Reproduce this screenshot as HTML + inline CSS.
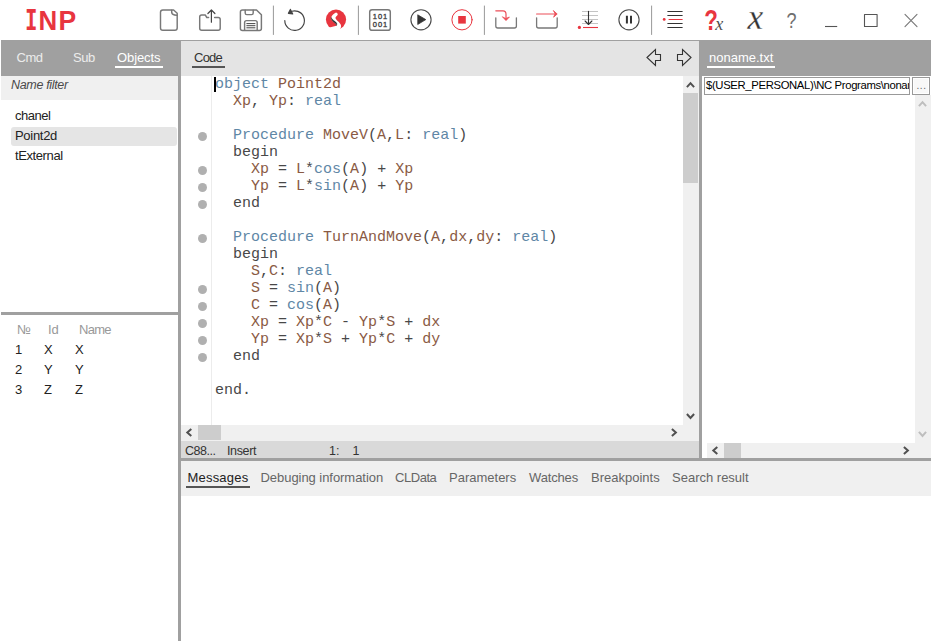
<!DOCTYPE html>
<html>
<head>
<meta charset="utf-8">
<title>INP</title>
<style>
html,body{margin:0;padding:0;}
body{width:932px;height:642px;overflow:hidden;background:#fff;position:relative;font-family:"Liberation Sans",sans-serif;font-size:13px;color:#333;}
.abs{position:absolute;}
#topbar{left:0;top:0;width:932px;height:40px;background:#fff;}
#topline{left:1px;top:40px;width:930px;height:1px;background:#a0a0a0;}
#logo{left:26px;top:3px;font-family:"DejaVu Sans Mono","Liberation Mono",monospace;font-weight:bold;font-size:27.5px;color:#e8353f;line-height:34px;letter-spacing:0px;}
#icons{left:0;top:0;width:932px;height:40px;}
/* left */
#lhead{left:1px;top:41px;width:177px;height:35px;background:#a0a0a0;}
.ltab{position:absolute;top:50px;font-size:13px;line-height:15px;color:#ececec;white-space:nowrap;}
#lfilter{left:1px;top:76px;width:177px;height:24px;background:#f0f0f0;}
#lfilter span{position:absolute;left:10px;top:2px;font-style:italic;font-size:12.5px;line-height:15px;color:#4a4a4a;letter-spacing:-0.33px;}
.vdiv{background:#a0a0a0;}
.hdiv{background:#a0a0a0;}
.li{position:absolute;left:15px;font-size:13px;line-height:15px;color:#222;white-space:nowrap;}
.th{position:absolute;font-size:13px;line-height:15px;color:#999;white-space:nowrap;}
.td{position:absolute;font-size:13px;line-height:15px;color:#222;white-space:nowrap;}
/* center */
#chead{left:181px;top:41px;width:518px;height:35px;background:#e4e4e4;}
#code{left:181px;top:76px;width:502px;height:349px;background:#fff;overflow:hidden;}
#gutter{left:211px;top:76px;width:1px;height:349px;background:#ececec;}
pre{margin:0;position:absolute;left:215px;top:76px;font-family:"Liberation Mono",monospace;font-size:15px;line-height:17px;color:#484848;}
.k{color:#5f87a6;}
.i{color:#8a5a44;}
.d{color:#404040;}
.dot{position:absolute;left:198px;width:9px;height:9px;border-radius:50%;background:#b0b0b0;}
.sb{background:#f0f0f0;}
.thumb{background:#cdcdcd;}
#status{left:181px;top:441px;width:518px;height:17px;background:#d9d9d9;}
.st{position:absolute;top:444px;font-size:12.5px;line-height:15px;color:#333;white-space:nowrap;}
/* right */
#rhead{left:699px;top:41px;width:232px;height:35px;background:#a0a0a0;}
/* bottom */
#btabs{left:181px;top:461px;width:750px;height:35px;background:#f0f0f0;}
.bt{position:absolute;top:470px;font-size:13px;line-height:15px;color:#666;white-space:nowrap;}
</style>
</head>
<body>
<div id="topbar" class="abs"></div>
<div id="topline" class="abs"></div>

<svg id="icons" class="abs" width="932" height="40" viewBox="0 0 932 40" fill="none" stroke-linecap="round" stroke-linejoin="round">
<g fill="#e8353f" stroke="none" font-weight="bold">
<text transform="translate(25.1 30.3) scale(0.75 1)" font-family="DejaVu Sans Mono, monospace" font-size="27.7">I</text>
<text transform="translate(38.5 30.3) scale(0.92 1)" font-family="Liberation Sans, sans-serif" font-size="28.2">N</text>
<text transform="translate(58.5 30.3) scale(0.94 1)" font-family="Liberation Sans, sans-serif" font-size="28.2">P</text>
</g>

<g stroke="#787878" stroke-width="1.45">
<!-- new file -->
<path d="M162.8 10 H173.6 L177.2 13.2 V28 Q177.2 30.3 174.9 30.3 H162.8 Q160.5 30.3 160.5 28 V12.3 Q160.5 10 162.8 10 Z"/>
<path d="M171.7 10.2 V12.4 Q171.9 15.3 177 15.2"/>
<!-- open folder -->
<path d="M208.6 17.5 H206.8 L205.2 14.9 H201.7 Q199.7 14.9 199.7 16.9 V28.3 Q199.7 30.3 201.7 30.3 H218.2 Q220.2 30.3 220.2 28.3 V19.5 Q220.2 17.5 218.2 17.5 H214.6"/>
<!-- save -->
<path d="M242.5 9.9 H256.5 L261.4 14.8 V28.4 Q261.4 30.4 259.4 30.4 H242.5 Q240.4 30.4 240.4 28.4 V12 Q240.4 9.9 242.5 9.9 Z"/>
<path d="M245.2 10.2 V13 Q245.2 14.6 246.8 14.6 H251.6 Q253.2 14.6 253.2 13 V10.2"/>
<path d="M244.6 30 V22.6 Q244.6 20.6 246.6 20.6 H255.2 Q257.2 20.6 257.2 22.6 V30"/>
</g>
<g stroke="#444" stroke-width="1.2">
<path d="M211.4 22.2 V10.2 M207.9 13.5 L211.4 10 L214.9 13.5"/>
<path d="M246.8 23.6 H255 M246.8 25.7 H255 M246.8 27.8 H255" stroke-width="1"/>
</g>
<!-- separators -->
<g stroke="#999" stroke-width="1">
<path d="M273.4 6 V34.5 M358.4 6 V34.5 M484.4 6 V34.5 M651.6 6 V34.5"/>
</g>
<!-- undo -->
<g stroke="#444" stroke-width="1.2">
<path d="M284.8 20.6 A9.8 9.8 0 1 0 289.6 12.2"/>
<path d="M290.4 9.4 L288.4 13.3 L292.7 13.9 Z" fill="#444"/>
</g>
<!-- S logo -->
<circle cx="336" cy="19.6" r="10.1" fill="#e8353f" stroke="none"/>
<path d="M336 12.4 C334.4 13 332.2 14.6 331.3 17 C330.6 19.4 332.6 21.2 334.2 22.6 C335.6 23.8 336.8 24.6 336.4 25.8 L327.6 28 L330 32 L341 32 L339.9 29.5 C341.6 27 341.4 25 340 23.4 C338.6 21.6 336.4 20.4 335.6 18.6 C335.2 17.4 336 16.6 337.2 15.6 C338.4 14.4 337.6 12.8 336 12.4 Z" fill="#fff" stroke="none"/>
<path d="M331.2 17.6 C330.9 19.6 332.6 21.2 334.2 22.6 C335.6 23.8 336.8 24.6 336.4 25.8 C337.6 24.2 336.8 22.8 335.4 21.8 C333.8 20.6 332.2 19.6 331.2 17.6 Z" fill="#2a2a2a" stroke="#2a2a2a" stroke-width="0.25"/>
<!-- 101 001 -->
<rect x="369.7" y="9.7" width="20.6" height="20.6" rx="2.4" stroke="#787878" stroke-width="1.45"/>
<text x="380.5" y="18.6" text-anchor="middle" font-family="Liberation Sans, sans-serif" font-weight="normal" font-size="7.5" fill="#444" stroke="#444" stroke-width="0.35" letter-spacing="1.05">101</text>
<text x="380.5" y="26.7" text-anchor="middle" font-family="Liberation Sans, sans-serif" font-weight="normal" font-size="7.5" fill="#444" stroke="#444" stroke-width="0.35" letter-spacing="1.05">001</text>
<!-- play -->
<circle cx="421" cy="19.8" r="10.1" stroke="#4a4a4a" stroke-width="1.1"/>
<path d="M418 15 L425.8 19.6 L418 24.3 Z" fill="#333" stroke="#333" stroke-width="0.8"/>
<!-- stop -->
<circle cx="462" cy="19.8" r="10.1" stroke="#e8353f" stroke-width="1"/>
<rect x="458.2" y="16" width="7.6" height="7.6" fill="#e8353f" stroke="none"/>
<!-- step in -->
<path d="M495.8 17.8 V26 Q495.8 28 497.8 28 H514.4 Q516.4 28 516.4 26 V17.8" stroke="#787878" stroke-width="1.3"/>
<path d="M495.8 10.8 H503 Q506 10.8 506 14 V19.5" stroke="#ec4e58" stroke-width="1.2"/><path d="M502.6 17 L506 20.6 L509.4 17 L506 18.4 Z" fill="#ec4e58" stroke="#ec4e58" stroke-width="0.8"/>
<!-- step over -->
<path d="M536.6 17.8 V26 Q536.6 28 538.6 28 H555.2 Q557.2 28 557.2 26 V17.8" stroke="#787878" stroke-width="1.3"/>
<path d="M536.6 14 H556" stroke="#ec4e58" stroke-width="1.2"/><path d="M553.6 10.8 L557.2 14 L553.6 17.2 L555 14 Z" fill="#ec4e58" stroke="#ec4e58" stroke-width="0.8"/>
<!-- run to cursor -->
<path d="M582 11.5 H598 M582 15.5 H598 M582 19.5 H598 M582 23.5 H598" stroke="#c4c4c4" stroke-width="1" stroke-linecap="butt"/>
<path d="M583 27.5 H598" stroke="#e8353f" stroke-width="1.1" stroke-linecap="butt"/>
<circle cx="579.4" cy="27.4" r="1.6" fill="#e8353f" stroke="none"/>
<path d="M588.5 11.3 V24.2 M585.1 21 L588.5 24.5 L591.9 21" stroke="#333" stroke-width="1.1"/>
<!-- pause -->
<circle cx="629" cy="19.8" r="10.1" stroke="#4a4a4a" stroke-width="1.1"/>
<path d="M626.9 15.8 V23.6 M631 15.8 V23.6" stroke="#333" stroke-width="2" stroke-linecap="butt"/>
<!-- list -->
<path d="M667.4 11.5 H682.6 M667.4 15.5 H682.6 M667.4 23.5 H682.6 M667.4 27.5 H682.6" stroke="#333" stroke-width="1" stroke-linecap="butt"/>
<path d="M668.6 19.5 H682.6" stroke="#e8353f" stroke-width="1" stroke-linecap="butt"/>
<circle cx="664.2" cy="19.4" r="1.4" fill="#e8353f" stroke="none"/>
<!-- ?x -->
<text transform="translate(704.3 29.5) scale(0.84 1.09)" font-family="Liberation Sans, sans-serif" font-weight="bold" font-size="26.5" fill="#e8353f" stroke="none">?</text>
<text x="715.2" y="29.7" font-family="Liberation Serif, serif" font-style="italic" font-size="18" fill="#3a3a3a" stroke="#fff" stroke-width="0.12">x</text>
<!-- X -->
<text transform="translate(747.6 29.2) scale(0.93 0.97)" font-family="Liberation Serif, serif" font-style="italic" font-size="38" fill="#333" stroke="#fff" stroke-width="0.3">x</text>
<!-- ? -->
<text transform="translate(786.6 28.3) scale(0.84 1)" font-family="Liberation Sans, sans-serif" font-size="21.5" fill="#707070" stroke="none">?</text>
<!-- window controls -->
<path d="M825 26.5 H837.2" stroke="#555" stroke-width="1.1" stroke-linecap="butt"/>
<rect x="864.5" y="14.5" width="12.6" height="12" stroke="#555" stroke-width="1.1"/>
<path d="M905 14.4 L917 26.6 M917 14.4 L905 26.6" stroke="#777" stroke-width="1.1"/>
</svg>

<!-- LEFT PANEL -->
<div id="lhead" class="abs"></div>
<div class="ltab" style="left:16.5px;letter-spacing:-0.5px;">Cmd</div>
<div class="ltab" style="left:73px;letter-spacing:-0.4px;">Sub</div>
<div class="ltab" style="left:117px;color:#fff;letter-spacing:-0.1px;">Objects</div>
<div class="abs" style="left:115px;top:66px;width:48px;height:2px;background:#fff;"></div>
<div id="lfilter" class="abs"><span>Name filter</span></div>
<div class="abs" style="left:11px;top:127px;width:166px;height:19px;background:#e5e5e5;border-radius:3px;"></div>
<div class="li" style="top:108px;letter-spacing:-0.5px;">chanel</div>
<div class="li" style="top:128px;letter-spacing:-0.3px;">Point2d</div>
<div class="li" style="top:148px;letter-spacing:-0.4px;">tExternal</div>
<div class="abs hdiv" style="left:1px;top:312px;width:178px;height:3px;"></div>
<div class="th" style="left:17px;top:322px;">№</div>
<div class="th" style="left:48px;top:322px;">Id</div>
<div class="th" style="left:79px;top:322px;letter-spacing:-0.7px;">Name</div>
<div class="td" style="left:15px;top:342px;">1</div>
<div class="td" style="left:44px;top:342px;">X</div>
<div class="td" style="left:75px;top:342px;">X</div>
<div class="td" style="left:15px;top:362px;">2</div>
<div class="td" style="left:44px;top:362px;">Y</div>
<div class="td" style="left:75px;top:362px;">Y</div>
<div class="td" style="left:15px;top:382px;">3</div>
<div class="td" style="left:44px;top:382px;">Z</div>
<div class="td" style="left:75px;top:382px;">Z</div>
<div class="abs vdiv" style="left:178px;top:41px;width:3px;height:600px;"></div>

<!-- CENTER -->
<div id="chead" class="abs"></div>
<div class="abs tx" style="left:194px;top:50px;font-size:13px;line-height:15px;color:#333;letter-spacing:-0.75px;">Code</div>
<div class="abs" style="left:192px;top:66px;width:33px;height:2px;background:#555;"></div>
<div id="code" class="abs"></div>
<div id="gutter" class="abs"></div>
<pre><span class="k">object</span> <span class="i">Point2d</span>
  <span class="i">Xp</span>, <span class="i">Yp</span>: <span class="k">real</span>

  <span class="k">Procedure</span> <span class="i">MoveV</span>(<span class="i">A</span>,<span class="i">L</span>: <span class="k">real</span>)
  begin
    <span class="i">Xp</span> = <span class="i">L</span>*<span class="k">cos</span>(<span class="i">A</span>) + <span class="i">Xp</span>
    <span class="i">Yp</span> = <span class="i">L</span>*<span class="k">sin</span>(<span class="i">A</span>) + <span class="i">Yp</span>
  end

  <span class="k">Procedure</span> <span class="i">TurnAndMove</span>(<span class="i">A</span>,<span class="i">dx</span>,<span class="i">dy</span>: <span class="k">real</span>)
  begin
    <span class="i">S</span>,<span class="i">C</span>: <span class="k">real</span>
    <span class="i">S</span> = <span class="k">sin</span>(<span class="i">A</span>)
    <span class="i">C</span> = <span class="k">cos</span>(<span class="i">A</span>)
    <span class="i">Xp</span> = <span class="i">Xp</span>*<span class="i">C</span> - <span class="i">Yp</span>*<span class="i">S</span> + <span class="i">dx</span>
    <span class="i">Yp</span> = <span class="i">Xp</span>*<span class="i">S</span> + <span class="i">Yp</span>*<span class="i">C</span> + <span class="i">dy</span>
  end

end.</pre>
<div class="abs" style="left:214px;top:77px;width:2px;height:15px;background:#000;"></div>
<div class="dot" style="top:132px;"></div>
<div class="dot" style="top:166px;"></div>
<div class="dot" style="top:183px;"></div>
<div class="dot" style="top:200px;"></div>
<div class="dot" style="top:234px;"></div>
<div class="dot" style="top:285px;"></div>
<div class="dot" style="top:302px;"></div>
<div class="dot" style="top:319px;"></div>
<div class="dot" style="top:336px;"></div>
<div class="dot" style="top:353px;"></div>
<!-- center scrollbars -->
<div class="abs sb" style="left:683px;top:76px;width:16px;height:365px;"></div>
<div class="abs thumb" style="left:683px;top:93px;width:15px;height:90px;"></div>
<div class="abs sb" style="left:181px;top:425px;width:518px;height:16px;"></div>
<div class="abs thumb" style="left:198px;top:425px;width:23px;height:15px;"></div>
<div id="status" class="abs"></div>
<div class="st" style="left:185px;letter-spacing:-0.5px;">C88...</div>
<div class="st" style="left:227px;letter-spacing:-0.35px;">Insert</div>
<div class="st" style="left:329px;">1:</div>
<div class="st" style="left:352.5px;">1</div>

<!-- RIGHT -->
<div id="rhead" class="abs"></div>
<div class="abs vdiv" style="left:699px;top:41px;width:3px;height:420px;"></div>
<div class="abs tx" style="left:709px;top:50px;font-size:13px;line-height:15px;color:#fff;">noname.txt</div>
<div class="abs" style="left:707px;top:66px;width:68px;height:2px;background:#fff;"></div>
<div class="abs" style="left:704px;top:77px;width:206px;height:18px;border:1px solid #999;background:#fff;overflow:hidden;box-sizing:border-box;"><span class="tx" style="position:absolute;left:1px;top:0px;font-size:11.3px;line-height:15px;color:#000;white-space:nowrap;letter-spacing:-0.35px;">$(USER_PERSONAL)\NC Programs\noname.txt</span></div>
<div class="abs" style="left:912px;top:77px;width:18px;height:18px;border:1px solid #999;background:#f8f8f8;box-shadow:inset 0 0 0 1px #fff;box-sizing:border-box;font-size:10px;line-height:16px;text-align:center;color:#666;letter-spacing:0.6px;text-indent:1px;">...</div>
<div class="abs sb" style="left:915px;top:95px;width:16px;height:363px;"></div>
<div class="abs sb" style="left:707px;top:443px;width:208px;height:15px;"></div>
<div class="abs thumb" style="left:724px;top:443px;width:17px;height:15px;"></div>

<!-- BOTTOM -->
<div class="abs hdiv" style="left:181px;top:458px;width:750px;height:3px;"></div>
<div id="btabs" class="abs"></div>
<div class="bt" style="left:187.5px;color:#222;letter-spacing:0.2px;">Messages</div>
<div class="abs" style="left:186px;top:486px;width:64px;height:2px;background:#555;"></div>
<div class="bt" style="left:260.5px;letter-spacing:-0.05px;">Debuging information</div>
<div class="bt" style="left:395px;letter-spacing:-0.45px;">CLData</div>
<div class="bt" style="left:449px;">Parameters</div>
<div class="bt" style="left:529px;letter-spacing:-0.15px;">Watches</div>
<div class="bt" style="left:591px;">Breakpoints</div>
<div class="bt" style="left:672px;">Search result</div>

<svg class="abs" style="left:0;top:0;pointer-events:none;" width="932" height="642" viewBox="0 0 932 642" fill="none">
<g stroke="#333" stroke-width="1.1" stroke-linejoin="miter">
<path d="M647 57.5 L655.5 49.6 V54.5 H660.5 V60.5 H655.5 V65.4 Z"/>
<path d="M691 57.5 L682.5 49.6 V54.5 H677.5 V60.5 H682.5 V65.4 Z"/>
</g>
<g stroke="#505050" stroke-width="2" stroke-linejoin="miter" stroke-linecap="butt">
<path d="M686.9 87.2 L690.5 83.2 L694.1 87.2"/>
<path d="M686.9 414 L690.5 418 L694.1 414"/>
<path d="M191.3 428.9 L187.3 432.5 L191.3 436.1"/>
<path d="M671.9 428.9 L675.9 432.5 L671.9 436.1"/>
<path d="M717.3 446.9 L713.3 450.5 L717.3 454.1"/>
<path d="M903.9 446.9 L907.9 450.5 L903.9 454.1"/>
</g>
<g stroke="#bebebe" stroke-width="2" stroke-linejoin="miter" stroke-linecap="butt">
<path d="M918.9 106.2 L922.5 102.2 L926.1 106.2"/>
<path d="M918.9 431.9 L922.5 435.9 L926.1 431.9"/>
</g>
</svg>
</body>
</html>
